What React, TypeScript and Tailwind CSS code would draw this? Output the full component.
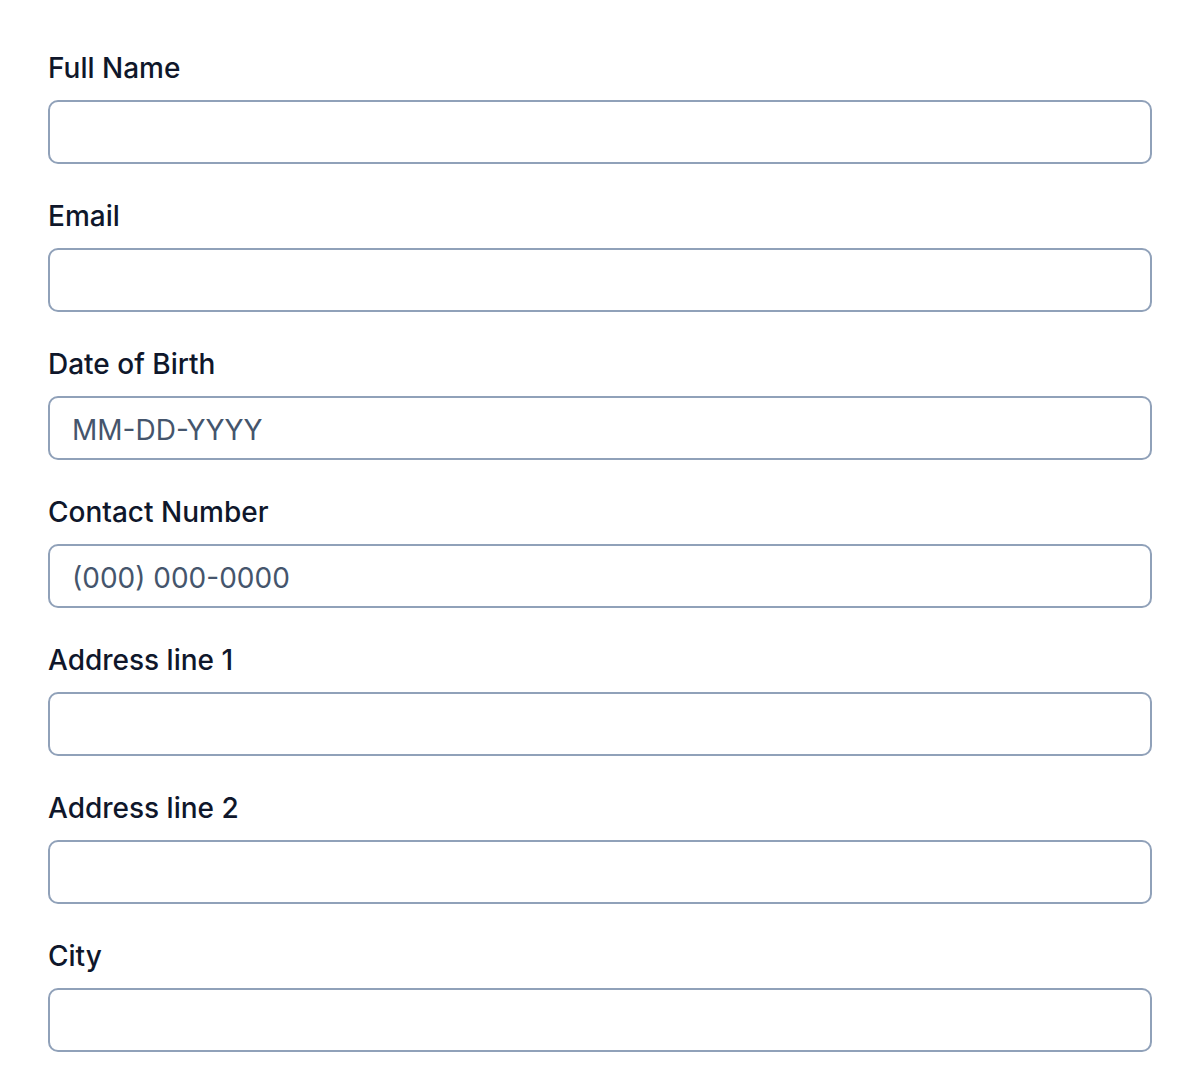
import React from 'react';

const fields = [
  { label: 'Full Name', placeholder: '' },
  { label: 'Email', placeholder: '' },
  { label: 'Date of Birth', placeholder: 'MM-DD-YYYY' },
  { label: 'Contact Number', placeholder: '(000) 000-0000' },
  { label: 'Address line 1', placeholder: '' },
  { label: 'Address line 2', placeholder: '' },
  { label: 'City', placeholder: '' },
];

export default function App() {
  return (
    <div className="min-h-screen bg-white px-12 pt-12 font-['Inter',sans-serif]">
      <form className="flex flex-col gap-8">
        {fields.map(f => (
          <div key={f.label} className="flex flex-col gap-3">
            <label className="h-10 leading-[41px] text-[28px] font-medium text-slate-900">{f.label}</label>
            <input
              type="text"
              placeholder={f.placeholder}
              className="h-16 w-full rounded-[10px] border-2 border-slate-400 bg-white px-[22px] pt-[3px] text-[28px] text-slate-900 placeholder:text-slate-600 outline-none"
            />
          </div>
        ))}
      </form>
    </div>
  );
}
